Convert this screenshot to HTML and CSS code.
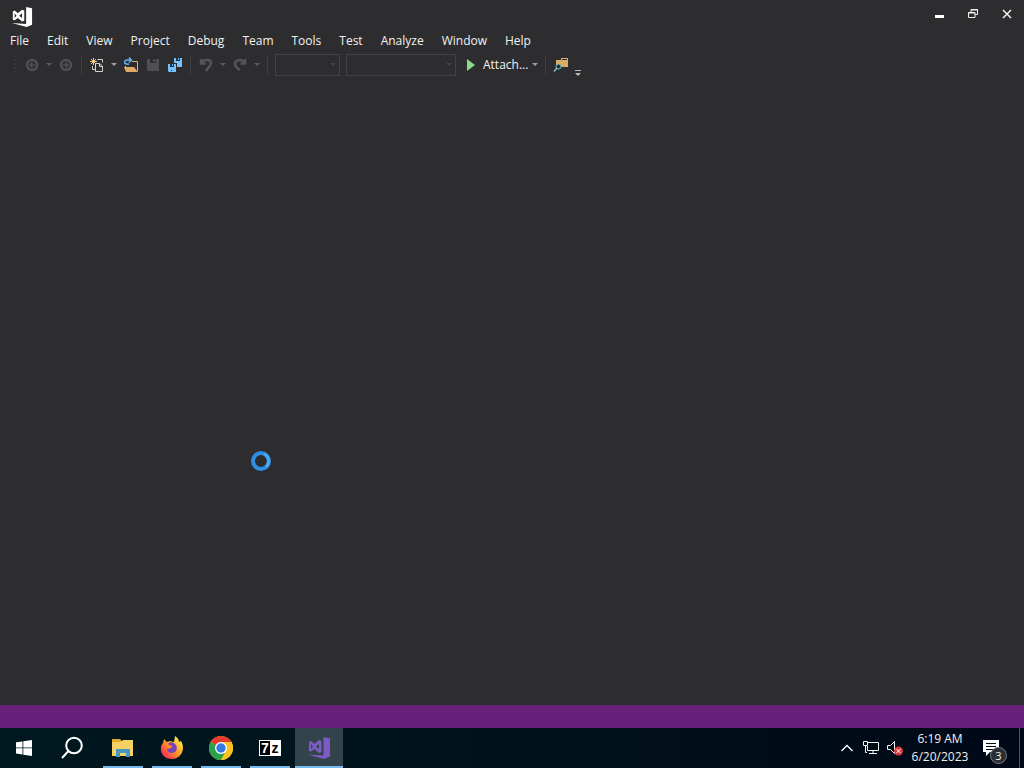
FILE: index.html
```html
<!DOCTYPE html>
<html lang="en">
<head>
    <meta charset="UTF-8">
    <meta name="viewport" content="width=device-width, initial-scale=1.0">
    <title>Visual Studio</title>
    <link rel="stylesheet" href="styles.css">
</head>
<body>
    <!-- shared shapes -->
    <svg class="defs" aria-hidden="true">
        <symbol id="caret" viewBox="0 0 6 4"><path d="M0 0h6L3 3z" fill="currentColor"/></symbol>
        <symbol id="vs" viewBox="0 0 24 24">
            <path fill="currentColor" fill-rule="evenodd" d="M16.500 1L23 2.500v18L17 23 1 18.500l15.500 1zM2 6l2-1 3.500 3L12 4l2.500 1v11L12 17l-4.500-4L4 15.500 2 15zM4 8v5l2-2.500zM12 8l-3 2.500 3 2.500z"/>
        </symbol>
    </svg>

    <header class="title-bar">
        <svg class="app-logo" viewBox="0 0 24 24"><use href="#vs"/></svg>
        <div class="window-controls">
            <button type="button" aria-label="Minimize">
                <svg width="12" height="12" viewBox="0 0 12 12"><path d="M2 7h9v3H2z" fill="#fff"/></svg>
            </button>
            <button type="button" aria-label="Restore">
                <svg width="12" height="12" viewBox="0 0 12 12" fill="none" stroke="#f1f1f1"><path d="M4 4V1.500h6.500v5H8M1.500 4.500H8v5H1.500z"/><path d="M4 2h7M1 5h7"/></svg>
            </button>
            <button type="button" aria-label="Close">
                <svg width="12" height="12" viewBox="0 0 12 12" fill="none" stroke="#f1f1f1" stroke-width="1.500"><path d="M2 2l8 8M10 2l-8 8"/></svg>
            </button>
        </div>
    </header>

    <nav class="menu-bar">
        <button type="button">File</button>
        <button type="button">Edit</button>
        <button type="button">View</button>
        <button type="button">Project</button>
        <button type="button">Debug</button>
        <button type="button">Team</button>
        <button type="button">Tools</button>
        <button type="button">Test</button>
        <button type="button">Analyze</button>
        <button type="button">Window</button>
        <button type="button">Help</button>
    </nav>

    <div class="toolbar">
        <span class="grip"></span>
        <button type="button" class="tool" aria-label="Navigate backward" disabled>
            <svg viewBox="0 0 16 16"><circle cx="8" cy="8" r="5" fill="none" stroke="#505052" stroke-width="2.500"/><path d="M11 8H6M8.500 5.500L6 8l2.500 2.500" fill="none" stroke="#505052" stroke-width="1.500"/></svg>
        </button>
        <button type="button" class="drop" aria-label="Backward history" disabled><svg><use href="#caret"/></svg></button>
        <button type="button" class="tool" aria-label="Navigate forward" disabled>
            <svg viewBox="0 0 16 16"><circle cx="8" cy="8" r="5" fill="none" stroke="#505052" stroke-width="2.500"/><path d="M5 8h5M7.500 5.500L10 8l-2.500 2.500" fill="none" stroke="#505052" stroke-width="1.500"/></svg>
        </button>
        <span class="separator"></span>
        <button type="button" class="tool" aria-label="New project">
            <svg viewBox="0 0 16 16"><path d="M8.500 2.500h5v3M3.500 9v3.500H6M6.500 6.500h4l3 2.500v5.500h-7zM10.500 6.500v3h3" fill="none" stroke="#d0d0d0"/><path d="M4.500 1v7M1 4.500h7M2 2l5 5M7 2L2 7" stroke="#f3c98b"/></svg>
        </button>
        <button type="button" class="drop" aria-label="New options"><svg><use href="#caret"/></svg></button>
        <button type="button" class="tool" aria-label="Open file">
            <svg viewBox="0 0 16 16"><path d="M9 4.500h5.500V14M2.500 9v4" fill="none" stroke="#dcb67a"/><path d="M1 10h10l4 5H3z" fill="#e0a866"/><path d="M6 7C0 8 1 3 4 3h4M6 .500L8.500 3 6 5.500" fill="none" stroke="#60b4f4" stroke-width="1.500"/></svg>
        </button>
        <button type="button" class="tool" aria-label="Save" disabled>
            <svg viewBox="0 0 16 16"><path fill="#505052" fill-rule="evenodd" d="M2 2h3v4h6V2h3v12H3l-1-1zM8 2h2v3H8z"/></svg>
        </button>
        <button type="button" class="tool" aria-label="Save all">
            <svg viewBox="0 0 16 16"><path fill="#75c1ff" fill-rule="evenodd" d="M7 1h2v3h4V1h2v9h-5V6H7zM11 1h1v2h-1zM1 7h2v3h4V7h2v8H2l-1-1zM5 7h1v2H5zM4 13v1h1v-1z"/></svg>
        </button>
        <span class="separator"></span>
        <button type="button" class="tool" aria-label="Undo" disabled>
            <svg viewBox="0 0 16 16"><path d="M3 2v4.500h4.500M3 6c2-4 10-4 10 0 0 3-3 4-5 8" fill="none" stroke="#555557" stroke-width="2.500"/></svg>
        </button>
        <button type="button" class="drop" aria-label="Undo history" disabled><svg><use href="#caret"/></svg></button>
        <button type="button" class="tool" aria-label="Redo" disabled>
            <svg viewBox="0 0 16 16"><path d="M13 2v4.500H8.500M12.500 6c-2-4-9.500-4-9.500 1 0 3 2 4 5 6" fill="none" stroke="#555557" stroke-width="2.500"/></svg>
        </button>
        <button type="button" class="drop" aria-label="Redo history" disabled><svg><use href="#caret"/></svg></button>
        <span class="separator"></span>
        <div class="combo combo-config">
            <select aria-label="Solution configuration" disabled><option></option></select>
            <svg><use href="#caret"/></svg>
        </div>
        <div class="combo combo-platform">
            <select aria-label="Solution platform" disabled><option></option></select>
            <svg><use href="#caret"/></svg>
        </div>
        <button type="button" class="attach">
            <svg width="10" height="12" viewBox="0 0 10 12"><path d="M1 0l8 6-8 6z" fill="#8bd98b"/></svg>
            Attach...
        </button>
        <button type="button" class="drop" aria-label="Attach options"><svg><use href="#caret"/></svg></button>
        <span class="separator"></span>
        <button type="button" class="tool" aria-label="Find in files">
            <svg viewBox="0 0 16 16"><path d="M3 3h5V1h7v9H3z" fill="#dcab62"/><path d="M9 2h5v1H9z" fill="#2d2d30"/><circle cx="5.500" cy="9.500" r="2.500" fill="#2d2d30" stroke="#76bfd6"/><path d="M4 11l-3 3.500" stroke="#76bfd6" stroke-width="1.500"/></svg>
        </button>
        <button type="button" class="overflow" aria-label="Toolbar options">
            <svg width="6" height="6" viewBox="0 0 6 6" fill="#b8b8b8"><path d="M0 0h6v1H0zM0 3h6L3 6z"/></svg>
        </button>
    </div>

    <main class="workspace">
        <svg class="busy-cursor" viewBox="0 0 20 20"><circle cx="10" cy="10" r="8" fill="none" stroke="#2f8de4" stroke-width="4"/><path d="M13 3a8 8 0 0 1 2 13" fill="none" stroke="#48a9f2" stroke-width="3"/></svg>
    </main>

    <div class="status-bar"></div>

    <footer class="taskbar">
        <button type="button" class="task" aria-label="Start">
            <svg width="16" height="16" viewBox="0 0 16 16" fill="#fff"><path d="M0 2.300L6.500 1.400v6.100H0zM7.300 1.300L16 0v7.500H7.300zM0 8.300h6.500v6.200L0 13.600zM7.300 8.300H16V16l-8.700-1.300z"/></svg>
        </button>
        <button type="button" class="task" aria-label="Search">
            <svg width="24" height="24" viewBox="0 0 24 24" fill="none" stroke="#fff" stroke-width="2"><circle cx="14" cy="9.500" r="7.800"/><path d="M8.500 15L2 22"/></svg>
        </button>
        <div class="open-apps">
            <button type="button" class="task running" aria-label="File Explorer">
                <svg width="24" height="24" viewBox="0 0 24 24"><path d="M1 3h8l2 2h11v3H1z" fill="#e4a92f"/><path d="M1 6h9l2-2h10v16H1z" fill="#f6d265"/><path d="M5 21v-8h14v8h-4v-4H9v4z" fill="#4798c0"/></svg>
            </button>
            <button type="button" class="task running" aria-label="Firefox">
                <svg width="24" height="24" viewBox="0 0 24 24">
                    <defs><linearGradient id="fox" x1="1" y1="0" x2="0" y2="1"><stop offset=".1" stop-color="#fff04a"/><stop offset=".5" stop-color="#ff9829"/><stop offset=".8" stop-color="#f9404c"/><stop offset="1" stop-color="#e82e84"/></linearGradient></defs>
                    <path d="M4 3l3 3 3-1 4 1 1-6c3 2 4 4 4 6l2-1c5 8 0 18-9 18C2 23-2 13 3 7z" fill="url(#fox)"/>
                    <path d="M8 8c2-3 6-2 8 1 2 4 0 8-4 8-3 0-5-2-5-4l4-1 1-2-3-1z" fill="#7545b8"/>
                    <path d="M5 9c2-1 4 0 7 1 0 2-3 2-4 3z" fill="#ff8a25"/>
                </svg>
            </button>
            <button type="button" class="task running" aria-label="Chrome">
                <svg width="24" height="24" viewBox="0 0 24 24"><circle cx="12" cy="12" r="12" fill="#fbc31b"/><path d="M12 12L1.600 6A12 12 0 0 1 22.400 6z" fill="#e33b2e"/><path d="M12 12L1.600 6A12 12 0 0 0 12 24l5-9z" fill="#2da04b"/><path d="M12 6h10.400A12 12 0 0 1 12 24l5-9z" fill="#fbc31b"/><circle cx="12" cy="12" r="6" fill="#fff"/><circle cx="12" cy="12" r="4.700" fill="#3779e4"/></svg>
            </button>
            <button type="button" class="task running" aria-label="7-Zip">
                <span class="zip-logo"><b>7</b><i>z</i></span>
            </button>
            <button type="button" class="task running active" aria-label="Visual Studio">
                <svg class="vs-task" width="24" height="24" viewBox="0 0 24 24"><use href="#vs"/></svg>
            </button>
        </div>
        <div class="tray">
            <button type="button" aria-label="Show hidden icons">
                <svg width="14" height="14" viewBox="0 0 14 14" fill="none" stroke="#fff" stroke-width="1.300"><path d="M1.500 10L7 4.500l5.500 5.500"/></svg>
            </button>
            <button type="button" aria-label="Network">
                <svg width="18" height="16" viewBox="0 0 18 16" fill="none" stroke="#f5f5f5"><path d="M6 2.500h10.500v8H5.500V6M11 10.500v3M7 13.500h8M1.500 1.500h4v4h-4zM3.500 5.500v7H5"/></svg>
            </button>
            <button type="button" aria-label="Volume muted">
                <svg width="18" height="16" viewBox="0 0 18 16"><path d="M1.500 5.500h3l4-4v12l-4-4h-3z" fill="none" stroke="#f5f5f5"/><circle cx="12.500" cy="11" r="4.500" fill="#d83b3b"/><path d="M10.500 9l4 4M14.500 9l-4 4" stroke="#fff"/></svg>
            </button>
            <button type="button" class="clock"><time>6:19 AM</time><time>6/20/2023</time></button>
            <button type="button" class="notifications" aria-label="3 notifications">
                <svg width="16" height="16" viewBox="0 0 16 16"><path fill="#fff" fill-rule="evenodd" d="M0 0h16v12h-9l-4 4v-4H0zM3 3v1h10V3zM3 6v1h10V6zM3 9v1h7V9z"/></svg>
                <span class="badge">3</span>
            </button>
            <button type="button" class="show-desktop" aria-label="Show desktop"></button>
        </div>
    </footer>
</body>
</html>
```
FILE: styles.css
```css
* {
    box-sizing: border-box;
}

body {
    margin: 0;
    min-height: 100vh;
    display: flex;
    flex-direction: column;
    background-color: #2d2d30;
    color: #f1f1f1;
    font-family: "Open Sans", "Noto Sans", sans-serif;
    font-size: 12px;
    line-height: 16px;
}

button {
    padding: 0;
    border: 0;
    background: none;
    color: inherit;
    font: inherit;
    display: flex;
    align-items: center;
    justify-content: center;
}

svg {
    display: block;
    flex: none;
}

.defs {
    position: absolute;
    width: 0;
    height: 0;
}

/* Title bar */
.title-bar {
    display: flex;
    justify-content: space-between;
    height: 30px;
    padding-left: 11px;
}

.app-logo {
    width: 22px;
    height: 22px;
    margin-top: 6px;
    color: #fff;
}

.window-controls {
    display: flex;
    height: 28px;
}

.window-controls button {
    width: 34px;
}

/* Menu */
.menu-bar {
    display: flex;
    height: 22px;
    padding-left: 1px;
}

.menu-bar button {
    height: 21px;
    padding: 0 9px;
}

/* Toolbar */
.toolbar {
    display: flex;
    align-items: center;
    height: 26px;
    padding-left: 13px;
}

.grip {
    width: 5px;
    height: 14px;
    margin-right: 3px;
    background-image: radial-gradient(#38383b 1px, transparent 1px);
    background-size: 4px 4px;
}

.tool {
    width: 22px;
    height: 22px;
}

.tool svg {
    width: 16px;
    height: 16px;
}

.drop {
    width: 12px;
    height: 22px;
    color: #a0a0a0;
}

.drop:disabled {
    color: #5a5a5c;
}

.drop svg,
.combo svg {
    width: 6px;
    height: 4px;
}

.separator {
    width: 1px;
    height: 20px;
    margin: 0 4px;
    background-color: #3f3f42;
}

.combo {
    position: relative;
    height: 22px;
    margin-left: 3px;
}

.combo + .combo {
    margin-left: 6px;
}

.combo select {
    appearance: none;
    width: 100%;
    height: 22px;
    border: 1px solid #434346;
    border-radius: 0;
    background-color: #2d2d30;
    opacity: 1;
}

.combo svg {
    position: absolute;
    top: 9px;
    right: 4px;
    color: #434346;
}

.combo-config {
    width: 65px;
}

.combo-platform {
    width: 110px;
}

.attach {
    gap: 7px;
    padding: 0 1px 0 10px;
}

.overflow {
    width: 12px;
    height: 22px;
    align-items: flex-end;
}

/* Workspace */
.workspace {
    position: relative;
    flex: 1;
}

.busy-cursor {
    position: absolute;
    left: 251px;
    top: 373px;
    width: 20px;
    height: 20px;
}

.status-bar {
    height: 23px;
    background-color: #68217a;
}

/* Taskbar */
.taskbar {
    display: flex;
    height: 40px;
    background: linear-gradient(90deg, #001820, #001219 50%, #000817);
}

.task {
    position: relative;
    width: 48px;
    height: 40px;
}

.open-apps {
    display: flex;
    gap: 1px;
    margin-left: 3px;
}

.running::after {
    content: "";
    position: absolute;
    left: 4px;
    right: 4px;
    bottom: 0;
    height: 2px;
    background-color: #76b9ed;
}

.active {
    background-color: #33434b;
}

.active::after {
    left: 0;
    right: 0;
}

.vs-task {
    color: #7c5cc4;
}

.zip-logo {
    display: flex;
    width: 22px;
    height: 16px;
    border: 1px solid #fff;
    background-color: #fff;
    color: #000;
    font: bold 14px/14px "Liberation Sans", sans-serif;
}

.zip-logo b {
    width: 10px;
    background-color: #000;
    color: #fff;
}

.zip-logo i {
    width: 10px;
    font-style: normal;
}

.tray {
    display: flex;
    margin-left: auto;
}

.tray button {
    width: 24px;
}

.tray .clock {
    flex-direction: column;
    width: 66px;
    line-height: 18px;
}

.tray .notifications {
    position: relative;
    justify-content: flex-start;
    width: 46px;
    padding-left: 10px;
}

.badge {
    position: absolute;
    left: 17px;
    top: 19px;
    width: 17px;
    height: 17px;
    border: 1px solid #777b80;
    border-radius: 50%;
    background-color: #2b2f35;
    font-size: 11px;
    line-height: 15px;
    text-align: center;
}

.tray .show-desktop {
    width: 5px;
    border-left: 1px solid #4c5560;
}
```
